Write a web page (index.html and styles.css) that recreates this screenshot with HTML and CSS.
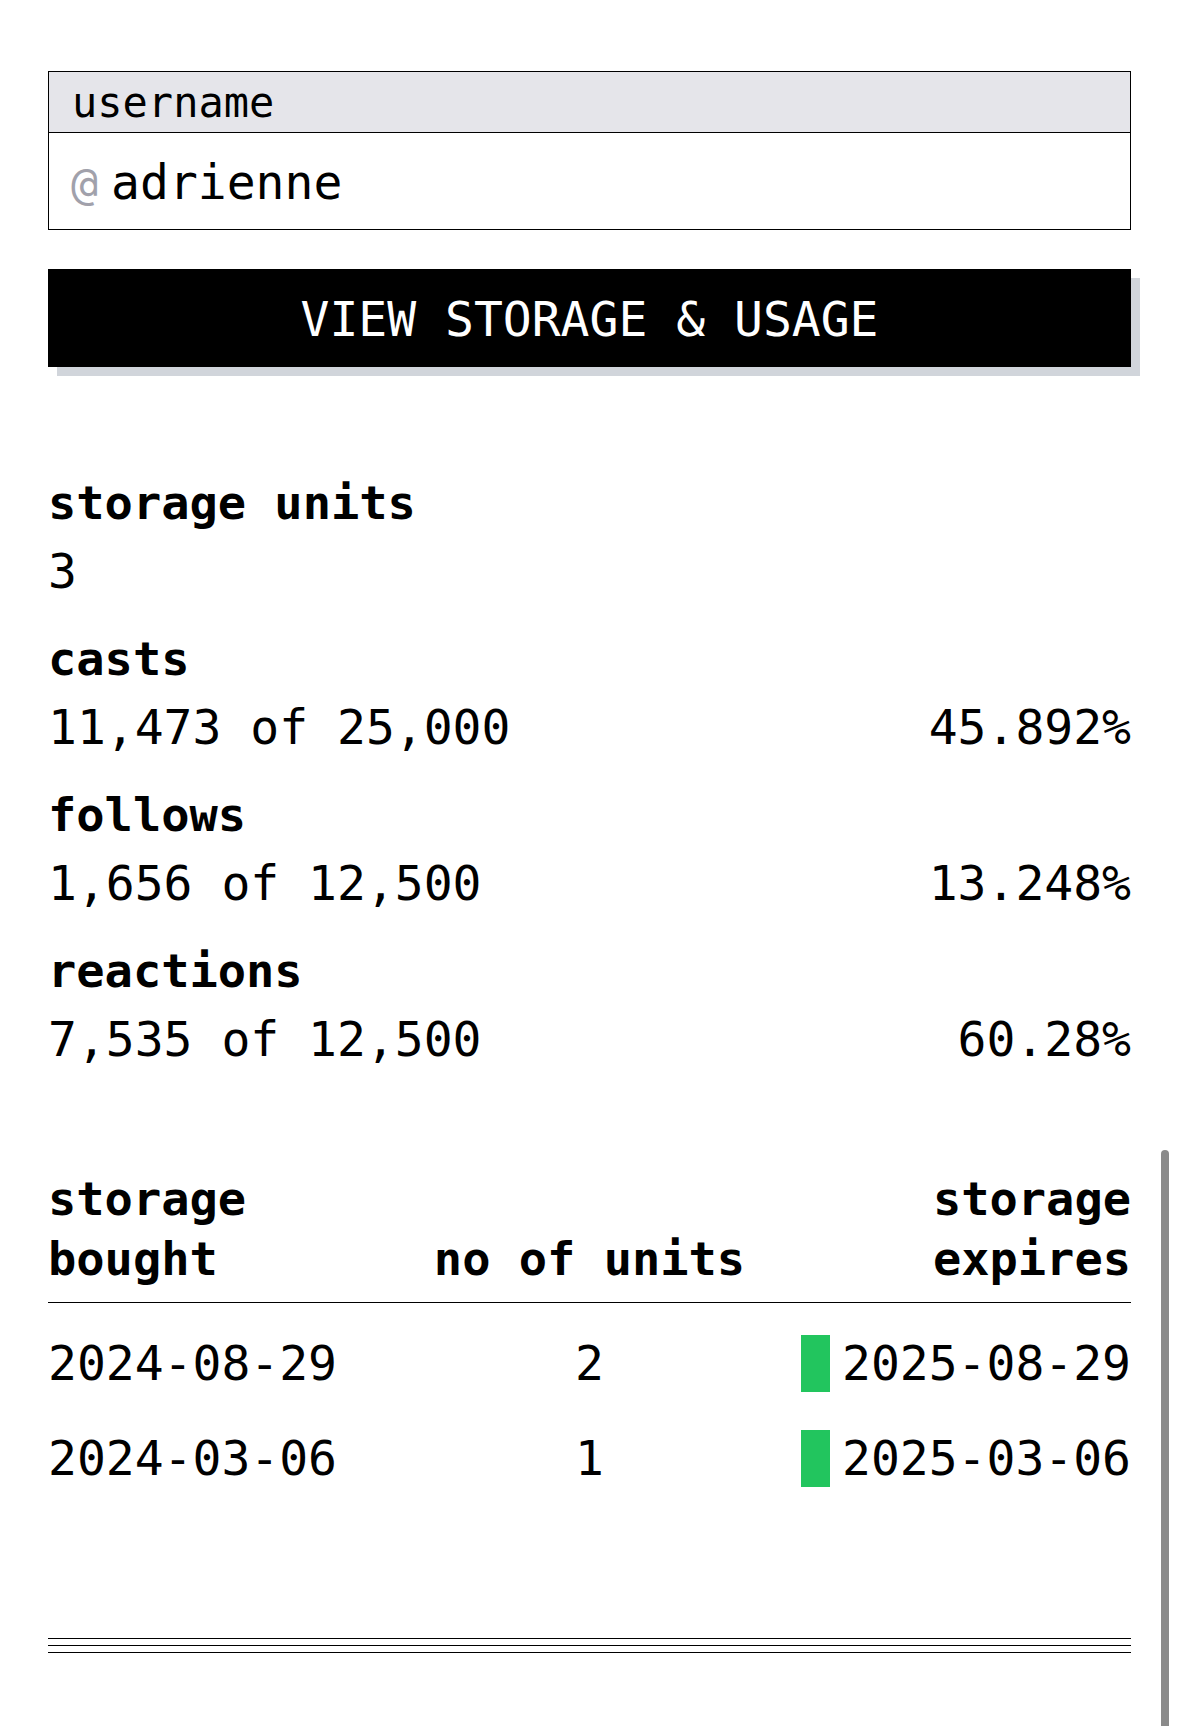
FILE: index.html
```html
<!DOCTYPE html>
<html lang="en">
<head>
<meta charset="utf-8">
<title>Storage &amp; usage</title>
<link rel="stylesheet" href="styles.css">
</head>
<body>
<main class="page">
  <div class="field">
    <div class="field-label">username</div>
    <div class="field-input"><span class="at">@</span><span class="value">adrienne</span></div>
  </div>

  <button class="btn" type="button">VIEW STORAGE &amp; USAGE</button>

  <section class="stats">
    <div class="stat">
      <div class="stat-label">storage units</div>
      <div class="stat-row"><span>3</span></div>
    </div>
    <div class="stat">
      <div class="stat-label">casts</div>
      <div class="stat-row"><span>11,473 of 25,000</span><span>45.892%</span></div>
    </div>
    <div class="stat">
      <div class="stat-label">follows</div>
      <div class="stat-row"><span>1,656 of 12,500</span><span>13.248%</span></div>
    </div>
    <div class="stat">
      <div class="stat-label">reactions</div>
      <div class="stat-row"><span>7,535 of 12,500</span><span>60.28%</span></div>
    </div>
  </section>

  <section class="table">
    <div class="thead">
      <div class="th th-left">storage bought</div>
      <div class="th th-center">no of units</div>
      <div class="th th-right">storage expires</div>
    </div>
    <div class="tbody">
      <div class="tr">
        <div class="td td-left">2024-08-29</div>
        <div class="td td-center">2</div>
        <div class="td td-right"><span class="status"></span><span>2025-08-29</span></div>
      </div>
      <div class="tr">
        <div class="td td-left">2024-03-06</div>
        <div class="td td-center">1</div>
        <div class="td td-right"><span class="status"></span><span>2025-03-06</span></div>
      </div>
    </div>
  </section>

  <div class="rule"></div>
</main>
<div class="scroll-thumb"></div>
</body>
</html>
```
FILE: styles.css
```css
html, body {
  margin: 0;
  padding: 0;
  background: #ffffff;
  overflow: hidden;
}

body {
  font-family: "DejaVu Sans Mono", "Liberation Mono", monospace;
  color: #000000;
}

.page {
  padding: 71px 48px 0;
}

/* username field */
.field {
  border: 1px solid #000;
}

.field-label {
  background: #e5e5ea;
  border-bottom: 1px solid #000;
  padding: 2px 23px 0;
  font-size: 42px;
  line-height: 58px;
}

.field-input {
  display: flex;
  align-items: baseline;
  height: 68px;
  padding: 15px 22px 13px;
  font-size: 48px;
  line-height: 68px;
}

.at {
  font-size: 45px;
  line-height: 1;
  color: #a1a1ab;
  margin-right: 13px;
}

/* button */
.btn {
  display: block;
  width: 100%;
  margin: 39px 0 0;
  padding: 3px 0 0;
  border: 0;
  background: #000;
  color: #fff;
  font-family: inherit;
  font-size: 48px;
  line-height: 95px;
  text-align: center;
  box-shadow: 9px 9px 0 #d1d5db;
  border-radius: 0;
}

/* stats */
.stats {
  margin-top: 102px;
  display: flex;
  flex-direction: column;
  gap: 20px;
}

.stat-label {
  font-weight: bold;
  font-size: 47px;
  line-height: 68px;
}

.stat-row {
  display: flex;
  justify-content: space-between;
  font-size: 48px;
  line-height: 68px;
}

/* table */
.table {
  margin-top: 96px;
}

.thead {
  display: grid;
  grid-template-columns: 1fr 1fr 1fr;
  align-items: end;
  padding-bottom: 13px;
  border-bottom: 1px solid #000;
}

.th {
  font-weight: bold;
  font-size: 47px;
  line-height: 60px;
}

.th-left { text-align: left; }
.th-center { text-align: center; }
.th-right { text-align: right; }

.tbody {
  padding-top: 26px;
  display: flex;
  flex-direction: column;
  gap: 27px;
}

.tr {
  display: grid;
  grid-template-columns: 1fr 1fr 1fr;
  align-items: center;
  font-size: 48px;
  line-height: 68px;
}

.td-left { text-align: left; }
.td-center { text-align: center; }
.td-right {
  display: flex;
  justify-content: flex-end;
  align-items: center;
  gap: 12px;
}

.status {
  width: 29px;
  height: 57px;
  background: #22c55e;
}

/* footer rule */
.rule {
  margin-top: 146px;
  height: 13px;
  border-top: 1px solid #000;
  border-bottom: 1px solid #000;
  background: linear-gradient(#000, #000) center / 100% 1px no-repeat;
}

/* overlay scroll indicator */
.scroll-thumb {
  position: fixed;
  top: 1150px;
  bottom: -6px;
  right: 10px;
  width: 8px;
  border-radius: 4px;
  background: #8a8a8a;
}
```
